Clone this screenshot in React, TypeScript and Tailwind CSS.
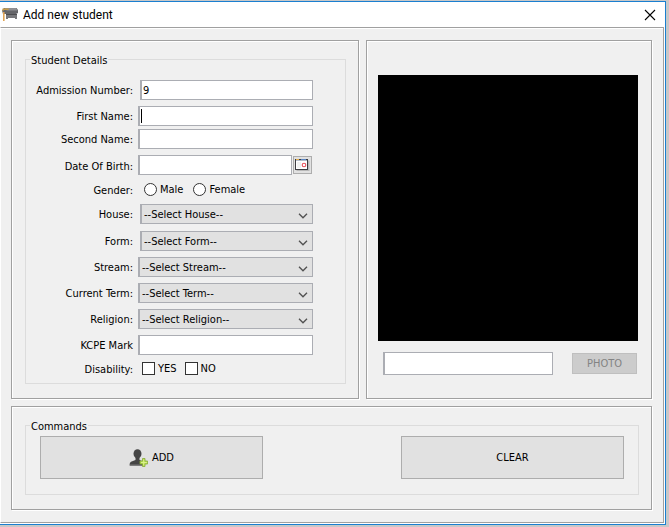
import type { ReactNode } from "react";

const panel =
  "border border-[#a0a0a0] shadow-[inset_1px_1px_0_#fff,1px_1px_0_#fff]";
const group = "min-w-0 border border-[#dcdcdc]";
const legend = "px-px pt-0.5 leading-[13px]";
const textBox =
  "h-5 w-full min-w-0 border border-l-2 border-[#abadb3] bg-white px-px pt-px outline-none";
const pushButton =
  "flex h-[43px] w-[223px] items-center justify-center gap-1 border border-[#adadad] bg-[#e1e1e1]";

type RowProps = {
  label: string;
  id?: string;
  className?: string;
  inset?: boolean;
  children: ReactNode;
};

function Row({ label, id, className = "mt-1.5 h-5 items-center", inset, children }: RowProps) {
  return (
    <div className={`flex gap-[5px] ${className}`}>
      <label
        htmlFor={id}
        className="w-[107px] shrink-0 pt-0.5 text-right leading-4 whitespace-nowrap"
      >
        {label}
      </label>
      <div className={`flex min-w-0 flex-1 items-center ${inset ? "pl-0.5" : ""}`}>{children}</div>
    </div>
  );
}

function Select({ id, text }: { id: string; text: string }) {
  return (
    <div className="relative w-full">
      <select
        id={id}
        className="block h-5 w-full appearance-none border border-l-2 border-[#abadb3] bg-[#e1e1e1] pt-0.5 pr-5 pl-0.5 leading-4 outline-none"
      >
        <option>{text}</option>
      </select>
      <svg
        className="pointer-events-none absolute top-[9px] right-[5px]"
        width="10"
        height="6"
        viewBox="0 0 10 6"
        fill="none"
        stroke="#505050"
        strokeWidth="1.3"
      >
        <path d="M1 0.8 L5 4.8 L9 0.8" />
      </svg>
    </div>
  );
}

function DeskIcon() {
  return (
    <svg width="17" height="15" viewBox="0 0 17 15">
      <path d="M2 1 H14.5 L16 3 V6 L14 7 H1 L0 3.5 Z" fill="#66666a" />
      <path d="M2.5 1 H14 L15.5 3.5 H5 L3 2.5 Z" fill="#8f8f93" />
      <path d="M0.5 1.4 H7.5 L6 3 H2 L0.5 4.5 Z" fill="#c79b45" />
      <path d="M4 7 H15 V12 H13 V11 H6 V12 H4 Z" fill="#77777b" />
      <path d="M4 7 H15 V8 H4 Z" fill="#4d4d50" />
      <path d="M1 5 H2.6 V14 H1 Z" fill="#e0a354" />
    </svg>
  );
}

function CalendarIcon() {
  return (
    <svg width="15" height="12" viewBox="0 0 15 12">
      <rect x="1.5" y="1.5" width="13" height="10.5" fill="#b8b8b8" />
      <rect x="0.5" y="0.5" width="12" height="10" fill="#fff" stroke="#3c3c40" />
      <rect x="1" y="0" width="3" height="1" fill="#e5b04e" />
      <rect x="6" y="0" width="5" height="1" fill="#5b86c4" />
      <rect x="1" y="1" width="11" height="1" fill="#b4bcc8" />
      <path d="M3 3 V9 M5 3 V9" stroke="#e4e4e4" />
      <circle cx="9" cy="6" r="1.8" fill="#fff" stroke="#e8505a" strokeWidth="1.1" />
    </svg>
  );
}

function AddUserIcon() {
  return (
    <svg width="19" height="18" viewBox="0 0 19 18">
      <ellipse cx="8.5" cy="4.8" rx="4" ry="4.6" fill="#444" />
      <path d="M6.5 8 H10.5 V11 L15 12.8 Q16 14 16 16.5 H0.5 Q0.5 13.6 2 12.8 L6.5 11 Z" fill="#444" />
      <path d="M1 15.5 H14 V16.8 H1 Z" fill="#777" />
      <path
        d="M13.5 9.5 H16 V12 H18.6 V15 H16 V17.5 H13.5 V15 H11 V12 H13.5 Z"
        fill="#b5dc4e"
        stroke="#86aa38"
        strokeWidth="0.8"
      />
      <path d="M14.7 10.5 V16.5 M12 13.5 H17.8" stroke="#daf08c" />
    </svg>
  );
}

const choice =
  "h-[13px] w-[13px] shrink-0 appearance-none border border-[#333] bg-white";

export default function App() {
  return (
    <div className="bg-[#c8c8c8] pt-px pr-[3px] pb-0.5 font-['DejaVu_Sans_Condensed','DejaVu_Sans',sans-serif] text-[11px] text-black">
      <div className="border-y border-r border-[#1a7fd0] bg-white pr-px pb-px">
        <header className="flex h-[25px] items-center justify-between pr-2 pl-0.5">
          <h1 className="flex items-center gap-1 font-['Roboto',sans-serif] text-xs">
            <DeskIcon />
            Add new student
          </h1>
          <button type="button" aria-label="Close">
            <svg width="12" height="12" viewBox="0 0 12 12" stroke="#000" strokeWidth="1.1">
              <path d="M1 1 L11 11 M11 1 L1 11" />
            </svg>
          </button>
        </header>

        <main className="border border-[#a0a0a0] border-l-white bg-[#f0f0f0] pt-3 pr-[11px] pb-3 pl-2.5 shadow-[inset_0_1px_0_#fff]">
          <form className="grid grid-cols-[348fr_286fr] gap-[7px]">
            <section className={`${panel} pt-[11px] pr-3 pb-3.5 pl-[13px]`}>
              <fieldset className={`${group} pt-[7px] pr-8 pb-[7px]`}>
                <legend className={`${legend} ml-1`}>Student Details</legend>
                <Row label="Admission Number:" id="admission" inset>
                  <input id="admission" type="text" defaultValue="9" className={textBox} />
                </Row>
                <Row label="First Name:" id="first">
                  <div className="relative w-full">
                    <input id="first" type="text" className={`${textBox} block`} />
                    <span className="absolute top-[3px] left-[3px] h-3.5 w-px bg-black" />
                  </div>
                </Row>
                <Row label="Second Name:" id="second" className="mt-[3px] h-5 items-center">
                  <input id="second" type="text" className={textBox} />
                </Row>
                <Row label="Date Of Birth:" id="birth" className="mt-1.5 h-5 items-end">
                  <input id="birth" type="text" className={textBox} />
                  <button
                    type="button"
                    aria-label="Pick a date"
                    className="mr-px ml-px flex h-[18px] w-[19px] shrink-0 items-center justify-center border border-[#adadad] bg-[#e1e1e1]"
                  >
                    <CalendarIcon />
                  </button>
                </Row>
                <Row label="Gender:" className="mt-1.5 h-[17px] items-center">
                  <label className="ml-1.5 flex items-center gap-[3px]">
                    <input type="radio" name="gender" className={`${choice} rounded-full`} />
                    <span className="pt-0.5">Male</span>
                  </label>
                  <label className="ml-2.5 flex items-center gap-[3px]">
                    <input type="radio" name="gender" className={`${choice} rounded-full`} />
                    <span className="pt-0.5">Female</span>
                  </label>
                </Row>
                <Row label="House:" id="house" inset>
                  <Select id="house" text="--Select House--" />
                </Row>
                <Row label="Form:" id="form" className="mt-[7px] h-5 items-center" inset>
                  <Select id="form" text="--Select Form--" />
                </Row>
                <Row label="Stream:" id="stream">
                  <Select id="stream" text="--Select Stream--" />
                </Row>
                <Row label="Current Term:" id="term">
                  <Select id="term" text="--Select Term--" />
                </Row>
                <Row label="Religion:" id="religion">
                  <Select id="religion" text="--Select Religion--" />
                </Row>
                <Row label="KCPE Mark" id="kcpe">
                  <input id="kcpe" type="text" className={textBox} />
                </Row>
                <Row label="Disability:" className="mt-1.5 h-[15px] items-center">
                  <label className="ml-1 flex items-center gap-[3px]">
                    <input type="checkbox" className={choice} />
                    <span className="pt-0.5">YES</span>
                  </label>
                  <label className="ml-2 flex items-center gap-[3px]">
                    <input type="checkbox" className={choice} />
                    <span className="pt-0.5">NO</span>
                  </label>
                </Row>
              </fieldset>
            </section>

            <section className={`${panel} pt-[34px] pr-[13px] pl-[11px]`}>
              <div className="h-[266px] bg-black" />
              <div className="mt-[11px] flex items-center justify-between pr-px pl-[5px]">
                <input
                  type="text"
                  aria-label="Photo path"
                  className="h-[23px] w-[170px] border border-l-2 border-[#abadb3] bg-white px-px outline-none"
                />
                <button
                  type="button"
                  disabled
                  className="h-[21px] w-[65px] border border-[#bfbfbf] bg-[#ccc] pt-0.5 text-[#838383]"
                >
                  PHOTO
                </button>
              </div>
            </section>

            <section className={`${panel} col-span-2 pt-[11px] pr-3 pb-3.5 pl-[13px]`}>
              <fieldset className={`${group} pr-3.5 pb-[15px] pl-3.5`}>
                <legend className={`${legend} -ml-2.5`}>Commands</legend>
                <div className="flex justify-between pt-[3px]">
                  <button type="button" className={pushButton}>
                    <AddUserIcon />
                    <span className="pt-0.5">ADD</span>
                  </button>
                  <button type="button" className={pushButton}>
                    <span className="pt-0.5">CLEAR</span>
                  </button>
                </div>
              </fieldset>
            </section>
          </form>
        </main>
      </div>
    </div>
  );
}
